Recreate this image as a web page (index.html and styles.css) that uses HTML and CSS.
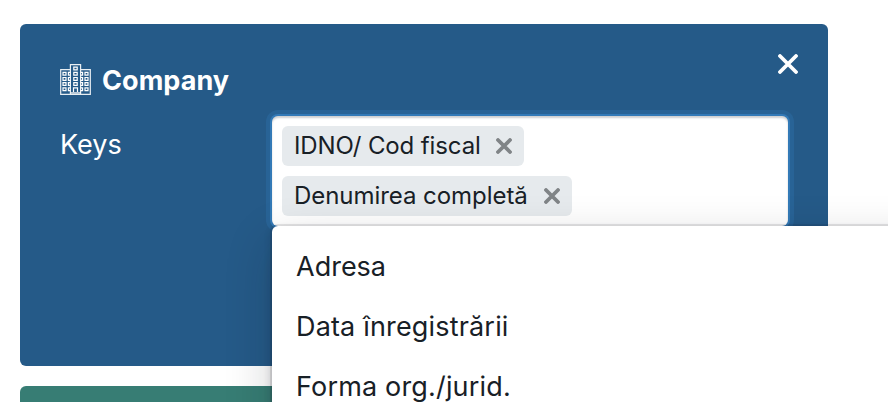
FILE: index.html
```html
<!DOCTYPE html>
<html lang="ro">
<head>
<meta charset="utf-8">
<title>Company</title>
<link rel="stylesheet" href="styles.css">
</head>
<body>
<main class="page">
  <section class="card company">
    <header class="card-header">
      <svg class="building" viewBox="0 0 31 31" fill="none" stroke="#fff">
        <path stroke-width="1.2" opacity=".9" d="M10.4 5.7H.7v24.6h29.6V5.7h-9.7M10.4 30.3V.7h10.2v29.6"/>
        <path stroke-width="1" opacity=".65" d="M10.5 28.5h10M10.5 29.4h10"/>
        <path stroke-width="1.2" d="M3 8.3h3v2.8H3zM10.4 8.3h-2v2.8h2M3 13.5h3v2.8H3zM10.4 13.5h-2v2.8h2M3 18.6h3v2.8H3zM10.4 18.6h-2v2.8h2M3 23.8h3v2.8H3zM10.4 23.8h-2v2.8h2M25 8.3h3v2.8h-3zM20.6 8.3h2v2.8h-2M25 13.5h3v2.8h-3zM20.6 13.5h2v2.8h-2M25 18.6h3v2.8h-3zM20.6 18.6h2v2.8h-2M25 23.8h3v2.8h-3zM20.6 23.8h2v2.8h-2M13.8 3.2h3.4v2.6h-3.4zM13.8 8.3h3.4v2.8h-3.4zM13.8 13.5h3.4v2.8h-3.4zM13.8 18.6h3.4v2.8h-3.4zM13.5 28v-4.2h4V28"/>
      </svg>
      <h2 class="title">Company</h2>
      <svg class="close" viewBox="0 0 20 20" stroke="#fff" stroke-width="3.8" stroke-linecap="round"><path d="M2 2l16 16M18 2L2 18"/></svg>
    </header>
    <div class="field">
      <label class="label">Keys</label>
      <div class="tag-input">
        <span class="tag"><span class="tag-idno">IDNO/ Cod fiscal</span><svg class="remove" viewBox="0 0 16 16"><path d="M2 2l12 12M14 2L2 14"/></svg></span>
        <span class="tag"><span class="tag-name">Denumirea completă</span><svg class="remove" viewBox="0 0 16 16"><path d="M2 2l12 12M14 2L2 14"/></svg></span>
        <ul class="menu">
          <li>Adresa</li>
          <li class="opt-long">Data înregistrării</li>
          <li class="opt-long">Forma org./jurid.</li>
        </ul>
      </div>
    </div>
  </section>
  <section class="card next"></section>
</main>
</body>
</html>
```
FILE: styles.css
```css
* { box-sizing: border-box; }
body {
  margin: 0;
  background: #fff;
  color: #182026;
  font-family: Inter, "Liberation Sans", sans-serif;
  font-size: 27px;
}
.page {
  display: flex;
  flex-direction: column;
  gap: 20px;
  height: 402px;
  padding: 24px 60px 0 20px;
  overflow: hidden;
}
.card { border-radius: 6px; }
.company {
  flex: none;
  height: 342px;
  padding: 40px;
  background: #255a88;
  color: #fff;
}
.next {
  flex: 1;
  border-radius: 6px 6px 0 0;
  background: #377d74;
}
.card-header { display: flex; height: 32px; }
.building { width: 31px; height: 31px; }
.title {
  margin: 0 auto 0 11px;
  font-size: 27px;
  line-height: 34px;
  font-weight: 700;
  letter-spacing: 0.05px;
}
.close {
  width: 20px;
  height: 20px;
  margin: -10px -10px 0 0;
}
.field { display: flex; margin-top: 20px; }
.label { width: 212px; line-height: 58px; }
.tag-input {
  position: relative;
  display: flex;
  flex-direction: column;
  align-items: flex-start;
  gap: 10px;
  width: 516px;
  height: 110px;
  padding: 10px;
  border-radius: 6px;
  background: #fff;
  box-shadow: 0 0 0 2px #337ab7, 0 0 0 6px rgba(51, 122, 183, 0.3), inset 0 2px 2px rgba(16, 22, 26, 0.2);
  color: #182026;
}
.tag {
  display: flex;
  align-items: center;
  gap: 15px;
  height: 40px;
  padding: 0 12px;
  border-radius: 6px;
  background: #e6eaed;
  font-size: 24px;
  line-height: 40px;
  white-space: nowrap;
}
.tag-idno { letter-spacing: -0.12px; }
.tag-name { margin-right: 1px; letter-spacing: -0.05px; }
.remove {
  width: 16px;
  height: 16px;
  stroke: #808487;
  stroke-width: 3.8;
  stroke-linecap: round;
}
.menu {
  position: absolute;
  top: 110px;
  left: 0;
  width: 720px;
  height: 400px;
  margin: 0;
  padding: 10px;
  border-radius: 6px;
  background: #fff;
  box-shadow: 0 0 0 2px rgba(16, 22, 26, 0.1), 0 4px 8px rgba(16, 22, 26, 0.2), 0 16px 48px rgba(16, 22, 26, 0.2);
  list-style: none;
}
.menu li { height: 60px; padding: 0 14px; line-height: 62px; }
.menu .opt-long { letter-spacing: 0.17px; }
```
